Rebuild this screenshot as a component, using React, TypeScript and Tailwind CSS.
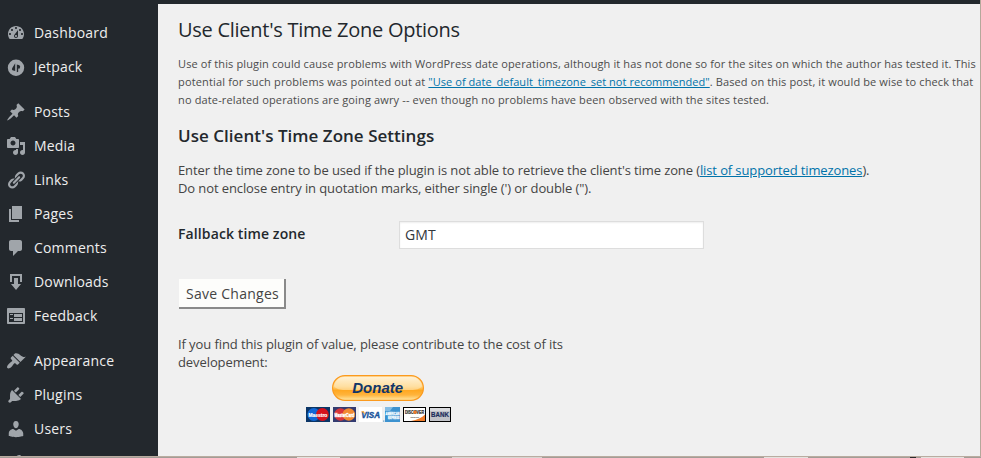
import React from "react";

const icons = {
  dashboard:
    "M3.76 16h12.48c1.1-1.37 1.76-3.11 1.76-5 0-4.42-3.58-8-8-8s-8 3.58-8 8c0 1.89.66 3.63 1.76 5zM10 4c.55 0 1 .45 1 1s-.45 1-1 1-1-.45-1-1 .45-1 1-1zM6 6c.55 0 1 .45 1 1s-.45 1-1 1-1-.45-1-1 .45-1 1-1zm8 0c.55 0 1 .45 1 1s-.45 1-1 1-1-.45-1-1 .45-1 1-1zm-5.37 5.55L12 7v6c0 1.1-.9 2-2 2s-2-.9-2-2c0-.57.24-1.08.63-1.45zM4 10c.55 0 1 .45 1 1s-.45 1-1 1-1-.45-1-1 .45-1 1-1zm12 0c.55 0 1 .45 1 1s-.45 1-1 1-1-.45-1-1 .45-1 1-1zm-5 3c0-.55-.45-1-1-1s-1 .45-1 1 .45 1 1 1 1-.45 1-1z",
  jetpack:
    "M10 2.6a8.2 8.2 0 1 0 0 16.4a8.2 8.2 0 1 0 0-16.4zM9.2 6.2v7.9c-.9-.2-2.9-.5-3.2-1.5-.2-.8.2-1.5.7-2.4zM10.8 7.6c1 .2 3 .5 3.3 1.6.2.8-.2 1.6-.7 2.5l-1.2-.3v3.4l-1.4.5z",
  posts:
    "M10.44 3.02l1.82-1.82 6.36 6.35-1.83 1.82c-1.05-.68-2.48-.57-3.41.36l-.75.75c-.92.93-1.04 2.35-.35 3.41l-1.83 1.82-2.41-2.41-2.8 2.79c-.42.42-3.38 2.71-3.8 2.29s1.86-3.39 2.28-3.81l2.79-2.79L4.1 9.36l1.83-1.82c1.05.69 2.48.57 3.4-.36l.75-.75c.93-.92 1.05-2.35.36-3.41z",
  media:
    "M13 11V4c0-.55-.45-1-1-1h-1.67L9 1H5L3.67 3H2c-.55 0-1 .45-1 1v7c0 .55.45 1 1 1h10c.55 0 1-.45 1-1zM7 4.5c1.38 0 2.5 1.12 2.5 2.5S8.38 9.5 7 9.5 4.5 8.38 4.5 7 5.62 4.5 7 4.5zM14 6h5v10.5c0 1.38-1.12 2.5-2.5 2.5S14 17.88 14 16.5s1.12-2.5 2.5-2.5c.17 0 .34.02.5.05V9h-3V6zm-4 8.05V13h2v3.5c0 1.38-1.12 2.5-2.5 2.5S7 17.88 7 16.5 8.12 14 9.5 14c.17 0 .34.02.5.05z",
  links:
    "M17.74 2.76c1.68 1.69 1.68 4.41 0 6.1l-1.53 1.52c-1.12 1.12-2.7 1.47-4.14 1.09l2.62-2.61.76-.77.76-.76c.84-.84.84-2.2 0-3.04-.84-.85-2.2-.85-3.04 0l-.77.76-3.38 3.38c-.37-1.44-.02-3.02 1.1-4.14l1.52-1.53c1.69-1.68 4.42-1.68 6.1 0zM8.59 13.43l5.34-5.34c.42-.42.42-1.1 0-1.52-.44-.43-1.13-.39-1.53 0l-5.33 5.34c-.42.42-.42 1.1 0 1.52.44.43 1.13.39 1.52 0zm-.76 2.29l4.14-4.15c.38 1.44.03 3.02-1.09 4.14l-1.52 1.53c-1.69 1.68-4.41 1.68-6.1 0-1.68-1.68-1.68-4.42 0-6.1l1.53-1.52c1.12-1.12 2.7-1.47 4.14-1.1l-4.14 4.15c-.85.84-.85 2.2 0 3.05.84.84 2.2.84 3.04 0z",
  pages: "M6 15V2h10v13H6zm-1 1h8v2H3V5h2v11z",
  comments:
    "M5 2h9c1.1 0 2 .9 2 2v7c0 1.1-.9 2-2 2h-2l-5 5v-5H5c-1.1 0-2-.9-2-2V4c0-1.1.9-2 2-2z",
  downloads: "M14.01 4v6h2V2H4v8h2.01V4h8zm-2 2v6h3l-5 6-5-6h3V6h4z",
  feedback:
    "M2 2h16c.55 0 1 .45 1 1v14c0 .55-.45 1-1 1H2c-.55 0-1-.45-1-1V3c0-.55.45-1 1-1zm15 14V7H3v9h14zM4 8v1h3V8H4zm4 0v3h8V8H8zm-4 4v1h3v-1H4zm4 0v3h8v-3H8z",
  appearance:
    "M14.48 11.06L7.41 3.99l1.5-1.5c.5-.56 2.3-.47 3.51.32 1.21.8 1.43 1.28 2.91 2.1 1.18.64 2.45 1.26 4.45.85zm-.71.71L6.7 4.7 4.93 6.47c-.39.39-.39 1.02 0 1.41l1.06 1.06c.39.39.39 1.03 0 1.42-.6.6-1.43 1.11-2.21 1.69-.35.26-.7.53-1.01.84C1.43 14.23.4 16.08 1.4 17.07c.99 1 2.84-.03 4.18-1.36.31-.31.58-.66.85-1.02.57-.78 1.08-1.61 1.69-2.21.39-.39 1.02-.39 1.41 0l1.06 1.06c.39.39 1.02.39 1.41 0z",
  plugins:
    "M13.11 4.36L9.87 7.6 8 5.73l3.24-3.24c.35-.34 1.05-.2 1.56.32.52.51.66 1.21.31 1.55zm-8 1.77l.91-1.12 9.01 9.01-1.19.84c-.71.71-2.63 1.16-3.82 1.16H6.14L4.9 17.26c-.59.59-1.54.59-2.12 0-.59-.58-.59-1.53 0-2.12l1.24-1.24v-3.88c0-1.13.4-3.19 1.09-3.89zm7.26 3.97l3.24-3.24c.34-.35 1.04-.21 1.55.31.52.51.66 1.21.31 1.55l-3.24 3.25z",
  users:
    "M10 9.25c-2.27 0-2.73-3.44-2.73-3.44C7 4.02 7.82 2 9.97 2c2.16 0 2.98 2.02 2.71 3.81 0 0-.41 3.44-2.68 3.44zm0 2.57L12.72 10c2.39 0 4.52 2.33 4.52 4.53v2.49s-3.65 1.13-7.24 1.13c-3.65 0-7.24-1.13-7.24-1.13v-2.49c0-2.25 1.94-4.48 4.47-4.48z",
  tools:
    "M16.68 9.77c-1.34 1.34-3.3 1.67-4.95.99l-5.41 6.52c-.99.99-2.59.99-3.58 0s-.99-2.59 0-3.57l6.52-5.42c-.68-1.65-.35-3.61.99-4.95 1.28-1.28 3.12-1.62 4.72-1.06l-2.89 2.89 2.82 2.82 2.86-2.87c.53 1.58.18 3.39-1.08 4.65z",
};

type MenuEntry = { icon: keyof typeof icons; label: string };

const groups: MenuEntry[][] = [
  [
    { icon: "dashboard", label: "Dashboard" },
    { icon: "jetpack", label: "Jetpack" },
  ],
  [
    { icon: "posts", label: "Posts" },
    { icon: "media", label: "Media" },
    { icon: "links", label: "Links" },
    { icon: "pages", label: "Pages" },
    { icon: "comments", label: "Comments" },
    { icon: "downloads", label: "Downloads" },
    { icon: "feedback", label: "Feedback" },
  ],
  [
    { icon: "appearance", label: "Appearance" },
    { icon: "plugins", label: "Plugins" },
    { icon: "users", label: "Users" },
    { icon: "tools", label: "" },
  ],
];

function MenuItem({ icon, label }: MenuEntry) {
  return (
    <li className="flex h-[34px] gap-2 pl-1.5">
      <svg viewBox="0 0 20 20" className="mt-[7px] size-5 shrink-0 fill-[#a0a5aa]" fillRule="evenodd">
        <path d={icons[icon]} />
      </svg>
      <span className="pt-2 text-[14px] leading-[18px] tracking-[0.19px] text-[#eeeeee]">{label}</span>
    </li>
  );
}

function DonateButton() {
  return (
    <svg width="92" height="26" viewBox="0 0 92 26" className="block">
      <defs>
        <linearGradient id="gold" x1="0" y1="0" x2="0" y2="1">
          <stop offset="0" stopColor="#ffe3ae" />
          <stop offset="0.45" stopColor="#ffd27c" />
          <stop offset="0.6" stopColor="#ffa822" />
          <stop offset="0.78" stopColor="#ffb43c" />
          <stop offset="1" stopColor="#ffe9a8" />
        </linearGradient>
        <linearGradient id="shine" x1="0" y1="0" x2="0" y2="1">
          <stop offset="0" stopColor="#fff6e2" />
          <stop offset="1" stopColor="#ffdc98" />
        </linearGradient>
      </defs>
      <rect x="0.6" y="0.6" width="90.8" height="24.8" rx="12.4" fill="url(#gold)" stroke="#fb9a1e" strokeWidth="1.2" />
      <path d="M12 2h68c5 0 9 4 10 9c-2 3-6 4-11 4H13c-5 0-9-1-11-4c1-5 5-9 10-9z" fill="url(#shine)" opacity="0.75" />
      <text x="20.2" y="18" textLength="51" lengthAdjust="spacingAndGlyphs" fontSize="15.5" fontWeight="700" fontStyle="italic" fill="#123668" fontFamily="'Liberation Sans', Arial, sans-serif">
        Donate
      </text>
    </svg>
  );
}

function PaymentCards() {
  return (
    <svg width="146" height="16" viewBox="0 0 146 16" className="ml-0.5 block" fontFamily="'Liberation Sans', Arial, sans-serif" fontWeight="700">
      <rect x="0" y="0" width="24" height="15" fill="#0b3566" />
      <circle cx="7.8" cy="7.5" r="6.4" fill="#1268d8" />
      <circle cx="16.4" cy="7.5" r="6.4" fill="#d5121d" />
      <text transform="translate(2.5 9.5) scale(0.85 1)" fontSize="5.8" fill="#ffffff" stroke="#ffffff" strokeWidth="0.2">Maestro</text>

      <rect x="27" y="0" width="23" height="15" fill="#333b70" />
      <circle cx="34.5" cy="7.5" r="6.2" fill="#d9343a" />
      <circle cx="42.8" cy="7.5" r="6.2" fill="#f28a30" />
      <text transform="translate(28.5 9.5) scale(0.62 1)" fontSize="5.8" fill="#ffffff" stroke="#ffffff" strokeWidth="0.4">MasterCard</text>

      <rect x="53" y="0" width="23" height="15" fill="#ffffff" />
      <text transform="translate(55.2 11) scale(0.9 1)" fontSize="9" fontStyle="italic" fill="#17529a" stroke="#17529a" strokeWidth="0.4">VISA</text>
      <path d="M55 4.2h3l1 3z" fill="#f0a12c" />

      <rect x="77.3" y="13.5" width="1" height="1.2" fill="#2b80bd" />
      <rect x="79" y="0" width="15" height="15" fill="#3c92cf" />
      <path d="M79 0h8l-3 4h-5z" fill="#83bce4" />
      <text transform="translate(79.5 7.6) scale(0.62 1)" fontSize="4.2" fill="#f2faff" stroke="#f2faff" strokeWidth="0.35">AMERICAN</text>
      <text transform="translate(82 12.2) scale(0.64 1)" fontSize="3.8" fill="#f2faff" stroke="#f2faff" strokeWidth="0.35">EXPRESS</text>

      <rect x="97.5" y="0.5" width="22" height="14" fill="#ffffff" stroke="#000000" />
      <path d="M119 7.5v6.5h-14c6-1 11-3.5 14-6.5z" fill="#f07c2a" />
      <text transform="translate(98.9 7) scale(0.67 1)" fontSize="5.5" fill="#2b2522" stroke="#2b2522" strokeWidth="0.2">DISCOVER</text>
      <circle cx="109" cy="5.2" r="1.7" fill="#ee7a2b" />
      <text transform="translate(104.5 10.8) scale(0.67 1)" fontSize="2.5" fill="#3c3430">NETWORK</text>

      <rect x="123.5" y="0.5" width="21" height="14" fill="#c1c3c8" stroke="#000000" />
      <path d="M124 1h20v3h-20z" fill="#d9dadd" />
      <text transform="translate(125.1 9.8) scale(0.95 1)" fontSize="6.5" fill="#1d2e5c" stroke="#1d2e5c" strokeWidth="0.2">BANK</text>
    </svg>
  );
}

export default function App() {
  return (
    <div className="flex h-[458px] w-[981px] flex-col overflow-hidden bg-[#f0f0f0] font-['Open_Sans','Noto_Sans',sans-serif]">
      <div className="flex h-[456px] shrink-0">
        <nav className="h-full w-[158px] shrink-0 overflow-hidden bg-[#23282d] pt-4">
          {groups.map((group, i) => (
            <ul key={i} className="mb-[11px]">
              {group.map((entry) => (
                <MenuItem key={entry.icon} {...entry} />
              ))}
            </ul>
          ))}
        </nav>
        <main className="flex w-[822px] shrink-0 flex-col items-start border-t-4 border-[#23282d] pl-5 whitespace-nowrap text-[#444444]">
          <h1 className="mt-[11px] text-[20px] leading-[30px] tracking-[-0.27px] text-[#23282d]">Use Client's Time Zone Options</h1>
          <p className="mt-[10px] text-[11px] leading-[18px] tracking-[0.12px] text-[#4c4c4c]">
            Use of this plugin could cause problems with WordPress date operations, although it has not done so for the sites on which the author has tested it. This
            <br />
            <span className="tracking-[0.15px]">potential for such problems was pointed out at </span>
            <a className="tracking-[0.04px] text-[#0073aa] underline">"Use of date_default_timezone_set not recommended"</a>. Based on this post, it would be wise to check that
            <br />
            <span className="tracking-[0.14px]">no date-related operations are going awry -- even though no problems have been observed with the sites tested.</span>
          </p>
          <h2 className="mt-[15px] text-[17px] leading-6 font-semibold tracking-[0.03px] text-[#23282d]">Use Client's Time Zone Settings</h2>
          <p className="mt-[13px] text-[13px] leading-[18px] tracking-[-0.11px]">
            Enter the time zone to be used if the plugin is not able to retrieve the client's time zone (
            <a className="text-[#0073aa] underline">list of supported timezones</a>).
            <br />
            <span className="tracking-[-0.1px]">Do not enclose entry in quotation marks, either single (') or double (").</span>
          </p>
          <div className="mt-6 flex h-7 items-center">
            <label className="w-[221px] pb-0.5 text-[14px] leading-[18px] font-semibold tracking-[0.11px] text-[#23282d]">Fallback time zone</label>
            <div className="flex h-7 w-[305px] items-center border border-[#dddddd] bg-white pl-[5px] text-[14px] leading-[18px] tracking-[0.1px] text-[#32373c] shadow-[inset_0_1px_2px_rgba(0,0,0,0.07)]">
              GMT
            </div>
          </div>
          <button className="mt-[30px] ml-px h-[30px] w-[107px] border-r-2 border-b-2 border-[#8a8a8a] bg-[#fdfdfb] pt-px pl-0.5 text-[14px] leading-[18px] tracking-[0.25px] text-[#444444]">
            Save Changes
          </button>
          <p className="mt-[26px] text-[13px] leading-[18px] tracking-[-0.09px]">
            If you find this plugin of value, please contribute to the cost of its
            <br />
            developement:
          </p>
          <div className="mt-1 flex w-[400px] flex-col items-center gap-1.5">
            <DonateButton />
            <PaymentCards />
          </div>
        </main>
        <div className="w-px shrink-0 bg-[#b5a89b]" />
      </div>
      <div className="h-px shrink-0 bg-[#b9aca0]" />
      <div className="flex h-px shrink-0 bg-[#a39c96]">
        <div className="ml-[297px] h-px w-[43px] bg-[#e4e2df]" />
        <div className="ml-[112px] h-px w-[90px] bg-[#d8d5d2]" />
        <div className="ml-[222px] h-px w-[44px] bg-[#e4e2df]" />
        <div className="ml-[102px] h-px w-[6px] bg-[#2c2a2c]" />
        <div className="ml-[5px] h-px w-[43px] bg-[#e4e2df]" />
      </div>
    </div>
  );
}
